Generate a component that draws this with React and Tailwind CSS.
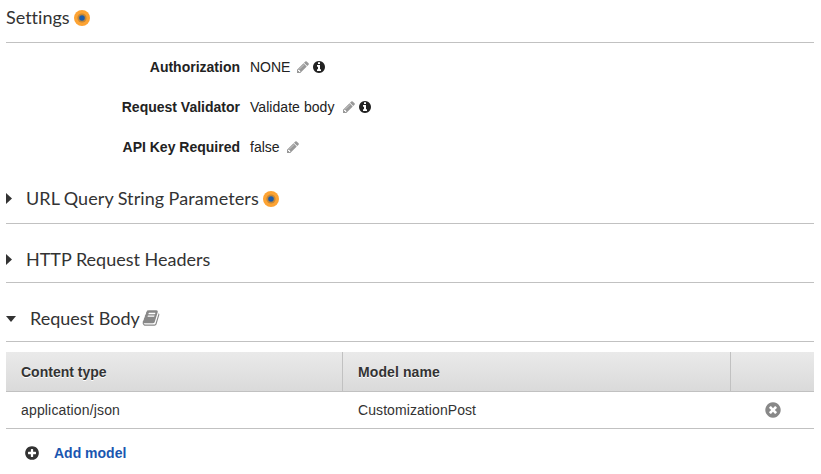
const DISC = 'm1664 896q0 209-103 385.5t-279.5 279.5-385.5 103-385.5-103-279.5-279.5-103-385.5 103-385.5 279.5-279.5 385.5-103 385.5 103 279.5 279.5 103 385.5z';
const PATHS = {
  pencil: 'M491 1536l91-91-235-235-91 91v107h128v128h107zm523-928q0-22-22-22-10 0-17 7l-542 542q-7 7-7 17 0 22 22 22 10 0 17-7l542-542q7-7 7-17zm-54-192l416 416-832 832h-416v-416zm683 96q0 53-37 90l-166 166-416-416 166-165q36-38 90-38 53 0 91 38l235 234q37 39 37 91z',
  info: 'M1152 1376v-160q0-14-9-23t-23-9h-96v-512q0-14-9-23t-23-9h-320q-14 0-23 9t-9 23v160q0 14 9 23t23 9h96v320h-96q-14 0-23 9t-9 23v160q0 14 9 23t23 9h448q14 0 23-9t9-23zm-128-896v-160q0-14-9-23t-23-9h-192q-14 0-23 9t-9 23v160q0 14 9 23t23 9h192q14 0 23-9t9-23zM' + DISC.slice(1),
  plus: 'M1344 960v-128q0-26-19-45t-45-19h-256v-256q0-26-19-45t-45-19h-128q-26 0-45 19t-19 45v256h-256q-26 0-45 19t-19 45v128q0 26 19 45t45 19h256v256q0 26 19 45t45 19h128q26 0 45-19t19-45v-256h256q26 0 45-19t19-45zM' + DISC.slice(1),
  times: 'M1277 1122q0-26-19-45l-181-181 181-181q19-19 19-45 0-27-19-46l-90-90q-19-19-46-19-26 0-45 19l-181 181-181-181q-19-19-45-19-27 0-46 19l-90 90q-19 19-19 46 0 26 19 45l181 181-181 181q-19 19-19 45 0 27 19 46l90 90q19 19 46 19 26 0 45-19l181-181 181 181q19 19 45 19 27 0 46-19l90-90q19-19 19-46zM' + DISC.slice(1),
  book: 'M1703 478q40 57 18 129l-275 906q-19 64-76.5 107.5t-122.5 43.5h-923q-77 0-148.5-53.5t-99.5-131.5q-24-67-2-127 0-4 3-27t4-37q1-8-3-21.5t-3-19.5q2-11 8-21t16.5-23.5 16.5-23.5q23-38 45-91.5t30-91.5q3-10 .5-30t-.5-28q3-11 17-28t17-23q21-36 42-92t25-90q1-9-2.5-32t.5-28q4-13 22-30.5t22-22.5q19-26 42.5-84.5t27.5-96.5q1-8-3-25.5t-2-26.5q2-8 9-18t18-23 17-21q8-12 16.5-30.5t15-35 16-36 19.5-32 26.5-23.5 36-11.5 47.5 5.5l-1 3q38-9 51-9h761q74 0 114 56t18 130l-274 906q-36 119-71.5 153.5t-128.5 34.5h-869q-27 0-38 15-11 16-1 43 24 70 144 70h923q29 0 56-15.5t35-41.5l300-987q7-22 5-57 38 15 59 43zm-1064 2q-4 13 2 22.5t20 9.5h608q13 0 25.5-9.5t16.5-22.5l21-64q4-13-2-22.5t-20-9.5h-608q-13 0-25.5 9.5t-16.5 22.5zm-83 256q-4 13 2 22.5t20 9.5h608q13 0 25.5-9.5t16.5-22.5l21-64q4-13-2-22.5t-20-9.5h-608q-13 0-25.5 9.5t-16.5 22.5z',
};

function Icon({ name, className }) {
  return (
    <svg viewBox="0 0 1792 1792" fill="currentColor" className={`shrink-0 ${className}`} aria-hidden="true">
      <path d={PATHS[name]} />
    </svg>
  );
}

// Round hotspot marker: orange ring, brown ring, blue centre.
function Hotspot({ className }) {
  return (
    <svg viewBox="0 0 16 16" className={`size-4 shrink-0 ${className}`} aria-hidden="true">
      <circle cx="8" cy="8" r="8" fill="#fda333" />
      <circle cx="8" cy="8" r="4.6" fill="#c78836" />
      <circle cx="8" cy="8" r="2.8" fill="#1c5bab" />
    </svg>
  );
}

function Caret({ open }) {
  return open ? (
    <svg viewBox="0 0 10 6" className="mt-px h-1.5 w-2.5 shrink-0" aria-hidden="true">
      <path d="M0 0h10L5 6z" fill="#333" />
    </svg>
  ) : (
    <svg viewBox="0 0 6 11" className="h-[11px] w-1.5 shrink-0" aria-hidden="true">
      <path d="M0 0v11l6-5.5z" fill="#333" />
    </svg>
  );
}

function Setting({ label, value, valueClass, info }) {
  return (
    <div className="flex h-10 items-center text-[#222]">
      <div className="w-[234px] text-right font-bold">{label}</div>
      <div className={`ml-2.5 ${valueClass}`}>{value}</div>
      <Icon name="pencil" className="ml-[7px] size-[14px] text-[#999]" />
      {info && <Icon name="info" className="ml-0.5 size-[14px] text-[#222]" />}
    </div>
  );
}

const heading = 'flex items-center border-b border-[#c1c1c1] font-[Lato,sans-serif] text-[18px] text-[#333] [font-variant-ligatures:none]';

export default function App() {
  return (
    <main className="h-[474px] overflow-hidden bg-white pr-[7px] pl-1.5 font-['Liberation_Sans',Arial,sans-serif] text-[14px] leading-5 text-[#333]">
      <h2 className={`${heading} h-[43px] pb-2`}>
        <span className="w-16">Settings</span>
        <Hotspot className="mt-0.5 ml-1" />
      </h2>
      <div className="h-[131px] pt-1">
        <Setting label="Authorization" value="NONE" valueClass="w-[39px]" info />
        <Setting label="Request Validator" value="Validate body" valueClass="w-[85px] tracking-[0.05px]" info />
        <Setting label="API Key Required" value="false" valueClass="w-[29px]" />
      </div>
      <h2 className={`${heading} h-[50px]`}>
        <Caret />
        <span className="ml-3.5 w-[233px] pb-0.5 tracking-[0.1px] whitespace-nowrap [word-spacing:-0.5px]">URL Query String Parameters</span>
        <Hotspot className="ml-1" />
      </h2>
      <h2 className={`${heading} h-[59px] pt-3`}>
        <Caret />
        <span className="ml-3.5">HTTP Request Headers</span>
      </h2>
      <h2 className={`${heading} h-[59px] pt-3`}>
        <Caret open />
        <span className="ml-3.5">Request Body</span>
        <Icon name="book" className="ml-0.5 size-[18px] text-[#888]" />
      </h2>
      <div className="mt-2.5 grid grid-cols-[337px_388px_83px]">
        <div className="flex h-10 items-center border-r border-b border-[#c1c1c1] bg-linear-to-b from-[#eaeaea] to-[#dadada] pl-[15px] font-bold [text-shadow:0_1px_0_#fff]">Content type</div>
        <div className="flex h-10 items-center border-r border-b border-[#c1c1c1] bg-linear-to-b from-[#eaeaea] to-[#dadada] pl-[15px] font-bold tracking-[0.1px] [text-shadow:0_1px_0_#fff]">Model name</div>
        <div className="h-10 border-b border-[#c1c1c1] bg-linear-to-b from-[#eaeaea] to-[#dadada]" />
        <div className="flex h-[37px] items-center border-b border-[#c1c1c1] pl-[15px] tracking-[0.16px]">application/json</div>
        <div className="flex h-[37px] items-center border-b border-[#c1c1c1] pl-[15px] tracking-[0.08px]">CustomizationPost</div>
        <div className="flex h-[37px] items-center justify-center border-b border-[#c1c1c1] pb-px">
          <Icon name="times" className="size-[18px] text-[#888]" />
        </div>
      </div>
      <div className="flex h-12 items-center pl-[18px]">
        <Icon name="plus" className="mb-px size-4 text-[#333]" />
        <a href="#add-model" className="ml-3.5 font-bold text-[#1a56b0]">Add model</a>
      </div>
    </main>
  );
}
